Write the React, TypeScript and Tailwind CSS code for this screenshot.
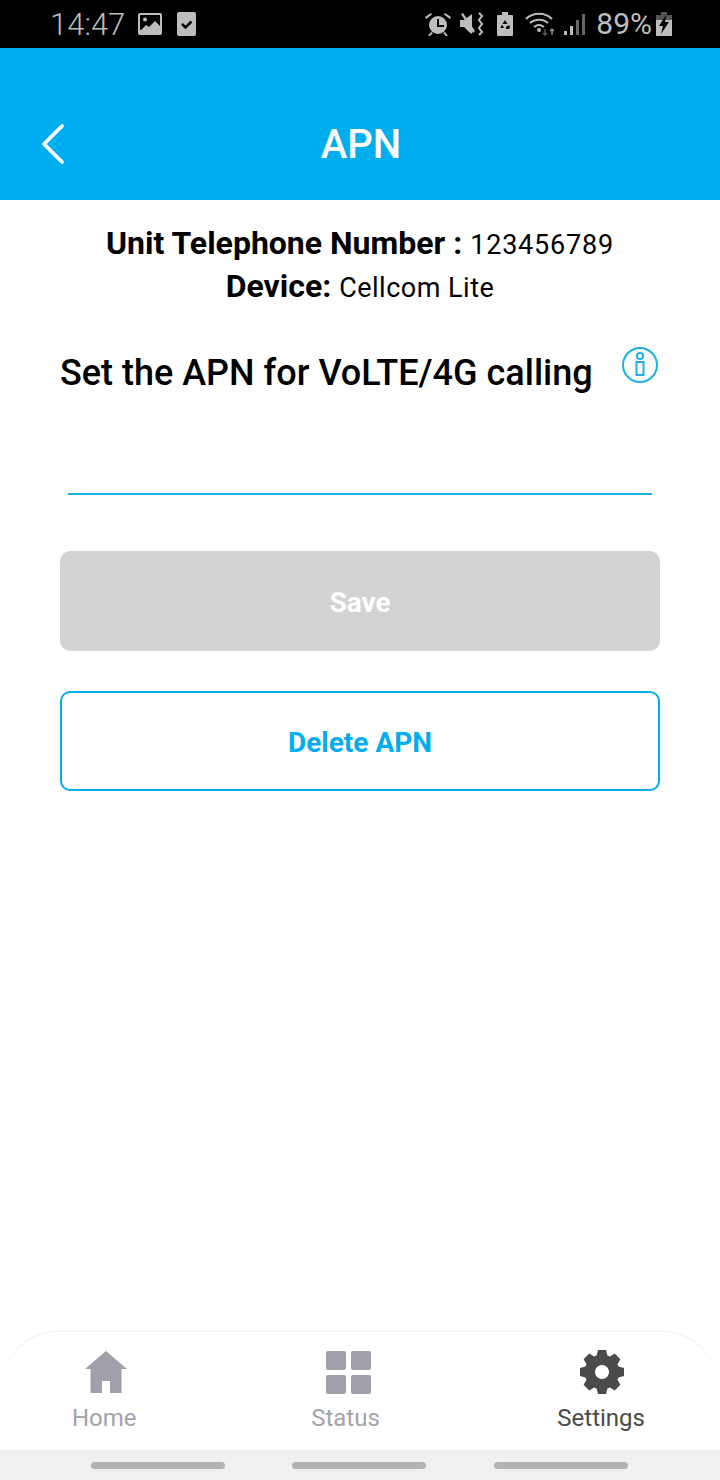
import { ChevronLeft } from "lucide-react";

const font = { fontFamily: "Roboto, sans-serif" };

// 8 tooth gear with an oval hole, 44 box
function gearPath() {
  const pts: string[] = [];
  for (let i = 0; i < 8; i++) {
    const a = (i * Math.PI) / 4;
    const at = (r: number, off: number) => {
      const x = 22 + r * Math.sin(a) + off * Math.cos(a);
      const y = 22 - r * Math.cos(a) + off * Math.sin(a);
      return `${x.toFixed(2)} ${y.toFixed(2)}`;
    };
    pts.push(at(16.5, -5.4), at(22, -4), at(22, 4), at(16.5, 5.4));
  }
  return `M${pts.join("L")}Z M22 15a7 7 0 1 0 0.01 0Z`;
}

function LeftIcons() {
  return (
    <>
      <svg width="24" height="22" viewBox="0 0 24 22" className="ml-[13px]">
        <rect width="24" height="22" rx="2" fill="#bdbdbd" />
        <rect x="2" y="2" width="20" height="15" fill="#000" />
        <circle cx="7" cy="6.500" r="2" fill="#bdbdbd" />
        <path d="M2 18l6-6 3 2 6-6 5 5v5z" fill="#bdbdbd" />
      </svg>
      <svg width="19" height="24" viewBox="0 0 19 24" className="ml-[15px]">
        <rect width="19" height="24" rx="2" fill="#bdbdbd" />
        <path d="M5 12l3.500 3.500 6-6" fill="none" stroke="#000" strokeWidth="2.500" />
      </svg>
    </>
  );
}

function RightIcons() {
  return (
    <div className="flex items-center">
      {/* alarm */}
      <svg width="26" height="24" viewBox="0 0 26 24" fill="#bdbdbd">
        <circle cx="13" cy="13" r="9" />
        <path d="M0 5l6-4 1 1.500-6 4.500zM26 5l-6-4-1 1.500 6 4.500zM6 20l-3 4h2l3-3zM20 20l3 4h-2l-3-3z" />
        <path d="M12 7h2v6h5v2h-7z" fill="#000" />
      </svg>
      {/* mute + vibrate */}
      <svg width="24" height="24" viewBox="0 0 24 24" className="ml-[9px]" fill="#bdbdbd">
        <path d="M0 8h4l8-6v20l-3-2-5-5H0z" />
        <path d="M1 2l2-1 12 18-2 2z" />
        <path d="M19 1l3 3-3 4 3 4-3 4 3 4-3 3" fill="none" stroke="#bdbdbd" strokeWidth="2" />
      </svg>
      {/* recycle battery */}
      <svg width="18" height="24" viewBox="0 0 18 24" className="ml-[12px]">
        <path d="M6 0h6v3h4a1 1 0 0 1 1 1v19a1 1 0 0 1-1 1H2a1 1 0 0 1-1-1V4a1 1 0 0 1 1-1h4z" fill="#bdbdbd" />
        <path d="M9 8l2.500 4h-5zM5 14l1.500-1 1.500 3H4.500zM13 13l1 2-1 2h-3v-2z" fill="#000" />
      </svg>
      {/* wifi */}
      <svg width="32" height="24" viewBox="0 0 32 24" className="ml-[11px]" fill="none">
        <path d="M1 7c7-7 19-7 26 0M5 11c5-4.500 13-4.500 18 0M9 15c3-2.500 7-2.500 10 0" stroke="#bdbdbd" strokeWidth="2" />
        <circle cx="14" cy="18" r="2" fill="#bdbdbd" />
        <path d="M20 17v6M18 21l2 2 2-2" stroke="#555" strokeWidth="1.500" />
        <path d="M27 23v-6M25 19l2-2 2 2" stroke="#888" strokeWidth="1.500" />
      </svg>
      {/* signal */}
      <svg width="22" height="24" viewBox="0 0 22 24" className="ml-[7px]" fill="#666">
        <rect x="0" y="19" width="3" height="4" fill="#bdbdbd" />
        <rect x="6" y="14" width="3" height="9" fill="#bdbdbd" />
        <rect x="12" y="8" width="3" height="15" />
        <rect x="18" y="2" width="3" height="21" />
      </svg>
      <span className="ml-[10px] text-[30px] leading-none text-[#bdbdbd]">89%</span>
      {/* charging battery */}
      <svg width="16" height="24" viewBox="0 0 16 24" className="ml-[4px]">
        <path d="M5 0h6v3h5v5H0V3h5z" fill="#555" />
        <path d="M0 8h16v16H0z" fill="#bdbdbd" />
        <path d="M10 3L3 14h4l-2 8 8-12H9z" fill="#000" />
      </svg>
    </div>
  );
}

function StatusBar() {
  return (
    <div className="flex h-12 items-center bg-black pr-[48px] pl-[50px]">
      <span className="text-[31px] leading-none font-light text-[#bdbdbd]">14:47</span>
      <LeftIcons />
      <div className="ml-auto">
        <RightIcons />
      </div>
    </div>
  );
}

function TabItem({ label, color, className, children }: { label: string; color: string; className?: string; children: React.ReactNode }) {
  return (
    <div className={`flex flex-col items-center ${className ?? ""}`}>
      <div className="flex h-[44px] items-center">{children}</div>
      <span className={`mt-[10px] text-2xl leading-[28px] ${color}`}>{label}</span>
    </div>
  );
}

export default function App() {
  return (
    <div className="flex h-[1480px] w-[720px] flex-col bg-white" style={font}>
      <StatusBar />
      <div className="relative flex h-[152px] items-center justify-center bg-[#00aeef] pt-[42px] pl-[2px]">
        <ChevronLeft className="absolute top-[60px] left-[17px]" size={72} strokeWidth={1.25} color="#fff" />
        <h1 className="text-[40px] leading-[48px] font-medium text-white">APN</h1>
      </div>

      <div className="mt-[23px] flex flex-col items-center text-black">
        <p className="text-[32px] leading-[40px] font-bold">
          Unit Telephone Number : <span className="text-[27px] font-normal tracking-[0.8px]">123456789</span>
        </p>
        <p className="mt-[1px] text-[32px] leading-[40px] font-bold">
          Device: <span className="text-[27px] font-normal tracking-[0.5px]">Cellcom Lite</span>
        </p>
      </div>

      <div className="relative mt-[38px] px-[60px]">
        <h2 className="text-[36px] leading-[54px] font-medium text-black">Set the APN for VoLTE/4G calling</h2>
        <svg width="38" height="38" viewBox="0 0 38 38" fill="none" stroke="#1db0e6" strokeWidth="2" className="absolute top-0 right-[61px]">
          <circle cx="19" cy="19" r="17" />
          <circle cx="19" cy="10" r="3" />
          <rect x="15.500" y="16" width="7" height="13" />
        </svg>
      </div>

      <div className="mx-[68px] mt-[93px] h-[2px] bg-[#1db0e6]" />

      <button className="mx-[60px] mt-[56px] h-[100px] rounded-[10px] bg-[#d3d3d3] pt-[4px] text-[28px] font-bold text-white">Save</button>
      <button className="mx-[60px] mt-[40px] h-[100px] rounded-[10px] border-2 border-[#00aeef] pt-[4px] text-[28px] font-bold text-[#00aeef]">Delete APN</button>

      <div className="mt-auto h-[120px] rounded-t-[60px] border-t-2 border-[#f5f5f5] bg-white pt-[18px]">
        <div className="flex justify-between pr-[75px] pl-[72px]">
          <TabItem label="Home" color="text-[#a3a3ad]">
            <svg width="44" height="44" viewBox="0 0 44 44" fill="#a0a0aa" className="ml-[3px]">
              <path d="M22 1L43 19H37.500V43H26V31H18V43H6.500V19H1z" />
            </svg>
          </TabItem>
          <TabItem label="Status" color="text-[#a3a3ad]" className="mr-[3px]">
            <div className="ml-[6px] grid grid-cols-2 gap-[5px]">
              <div className="h-[19px] w-[20px] rounded-[2px] bg-[#a0a0aa]" />
              <div className="h-[19px] w-[20px] rounded-[2px] bg-[#a0a0aa]" />
              <div className="h-[19px] w-[20px] rounded-[2px] bg-[#a0a0aa]" />
              <div className="h-[19px] w-[20px] rounded-[2px] bg-[#a0a0aa]" />
            </div>
          </TabItem>
          <TabItem label="Settings" color="text-[#4a4a4a]">
            <svg width="44" height="44" viewBox="0 0 44 44" fill="#4a4a4a" fillRule="evenodd" className="ml-[2px]">
              <path d={gearPath()} />
            </svg>
          </TabItem>
        </div>
      </div>
      <div className="flex h-[30px] items-center gap-[67px] bg-[#f0f0f0] pl-[91px]">
        <div className="h-[7px] w-[134px] rounded-full bg-[#b2b2b2]" />
        <div className="h-[7px] w-[134px] rounded-full bg-[#b2b2b2]" />
        <div className="ml-[1px] h-[7px] w-[134px] rounded-full bg-[#b2b2b2]" />
      </div>
    </div>
  );
}
